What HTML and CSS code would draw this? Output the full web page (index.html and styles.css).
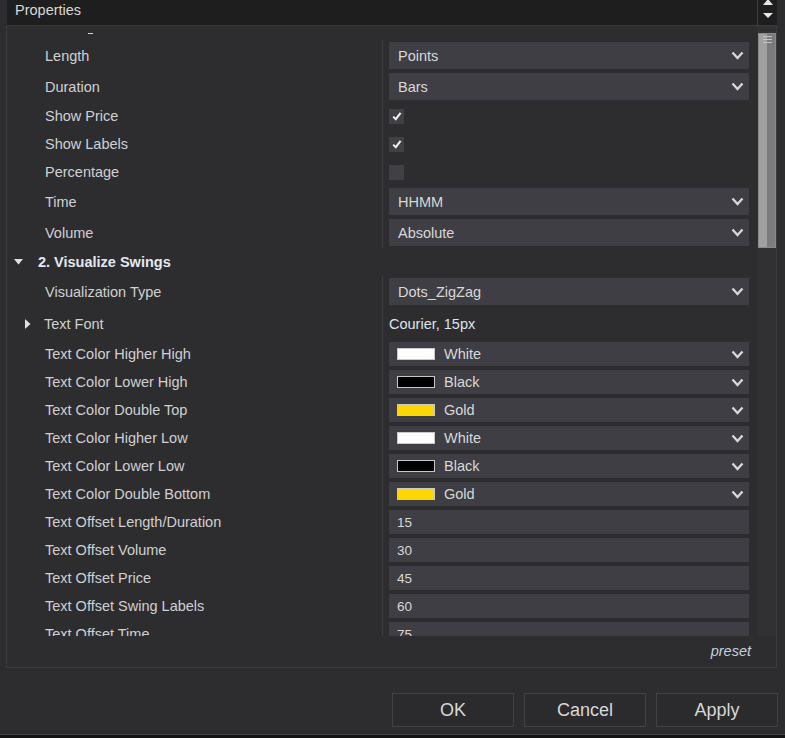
FILE: index.html
```html
<!DOCTYPE html>
<html lang="en">
<head>
    <meta charset="UTF-8">
    <title>Properties</title>
    <link rel="stylesheet" href="styles.css">
</head>
<body>
    <!-- Barre de titre -->
    <div class="header">
        <span class="title">Properties</span>
        <div class="spin">
            <svg class="spin-up" width="10" height="6" viewBox="0 0 10 6"><polygon points="0,6 10,6 5,0" fill="#e6e6e6"/></svg>
            <svg class="spin-down" width="10" height="5" viewBox="0 0 10 5"><polygon points="0,0 10,0 5,5" fill="#e6e6e6"/></svg>
        </div>
    </div>

    <div class="panel">
        <div class="grid-wrap">
            <div class="list">
                <div class="spacer"><span class="tail"></span></div>

                <div class="row row-select">
                    <div class="name">Length</div>
                    <div class="value"><div class="select"><span>Points</span><svg class="chev" width="13" height="9" viewBox="0 0 13 9"><polyline points="1.5,1.5 6.5,7 11.5,1.5"/></svg></div></div>
                </div>
                <div class="row row-select">
                    <div class="name">Duration</div>
                    <div class="value"><div class="select"><span>Bars</span><svg class="chev" width="13" height="9" viewBox="0 0 13 9"><polyline points="1.5,1.5 6.5,7 11.5,1.5"/></svg></div></div>
                </div>
                <div class="row">
                    <div class="name">Show Price</div>
                    <div class="value"><div class="check"><svg width="10" height="9" viewBox="0 0 10 9"><path d="M1.2 4.6 L3.8 7.2 L8.6 0.8"/></svg></div></div>
                </div>
                <div class="row">
                    <div class="name">Show Labels</div>
                    <div class="value"><div class="check"><svg width="10" height="9" viewBox="0 0 10 9"><path d="M1.2 4.6 L3.8 7.2 L8.6 0.8"/></svg></div></div>
                </div>
                <div class="row">
                    <div class="name">Percentage</div>
                    <div class="value"><div class="check"></div></div>
                </div>
                <div class="row row-select">
                    <div class="name">Time</div>
                    <div class="value"><div class="select"><span>HHMM</span><svg class="chev" width="13" height="9" viewBox="0 0 13 9"><polyline points="1.5,1.5 6.5,7 11.5,1.5"/></svg></div></div>
                </div>
                <div class="row row-select">
                    <div class="name">Volume</div>
                    <div class="value"><div class="select"><span>Absolute</span><svg class="chev" width="13" height="9" viewBox="0 0 13 9"><polyline points="1.5,1.5 6.5,7 11.5,1.5"/></svg></div></div>
                </div>

                <!-- Catégorie -->
                <div class="category">
                    <svg width="9" height="6" viewBox="0 0 9 6"><polygon points="0,0 9,0 4.5,5.5" fill="#e0e0e0"/></svg>
                    <span>2. Visualize Swings</span>
                </div>

                <div class="row row-select">
                    <div class="name">Visualization Type</div>
                    <div class="value"><div class="select"><span>Dots_ZigZag</span><svg class="chev" width="13" height="9" viewBox="0 0 13 9"><polyline points="1.5,1.5 6.5,7 11.5,1.5"/></svg></div></div>
                </div>
                <div class="row row-font">
                    <div class="name name-sub">
                        <svg width="6" height="10" viewBox="0 0 6 10"><polygon points="0,0 5.5,5 0,10" fill="#e0e0e0"/></svg>
                        <span>Text Font</span>
                    </div>
                    <div class="value"><span class="plain">Courier, 15px</span></div>
                </div>

                <div class="row">
                    <div class="name">Text Color Higher High</div>
                    <div class="value"><div class="box"><span class="swatch white"></span><span>White</span><svg class="chev" width="13" height="9" viewBox="0 0 13 9"><polyline points="1.5,1.5 6.5,7 11.5,1.5"/></svg></div></div>
                </div>
                <div class="row">
                    <div class="name">Text Color Lower High</div>
                    <div class="value"><div class="box"><span class="swatch black"></span><span>Black</span><svg class="chev" width="13" height="9" viewBox="0 0 13 9"><polyline points="1.5,1.5 6.5,7 11.5,1.5"/></svg></div></div>
                </div>
                <div class="row">
                    <div class="name">Text Color Double Top</div>
                    <div class="value"><div class="box"><span class="swatch gold"></span><span>Gold</span><svg class="chev" width="13" height="9" viewBox="0 0 13 9"><polyline points="1.5,1.5 6.5,7 11.5,1.5"/></svg></div></div>
                </div>
                <div class="row">
                    <div class="name">Text Color Higher Low</div>
                    <div class="value"><div class="box"><span class="swatch white"></span><span>White</span><svg class="chev" width="13" height="9" viewBox="0 0 13 9"><polyline points="1.5,1.5 6.5,7 11.5,1.5"/></svg></div></div>
                </div>
                <div class="row">
                    <div class="name">Text Color Lower Low</div>
                    <div class="value"><div class="box"><span class="swatch black"></span><span>Black</span><svg class="chev" width="13" height="9" viewBox="0 0 13 9"><polyline points="1.5,1.5 6.5,7 11.5,1.5"/></svg></div></div>
                </div>
                <div class="row">
                    <div class="name">Text Color Double Bottom</div>
                    <div class="value"><div class="box"><span class="swatch gold"></span><span>Gold</span><svg class="chev" width="13" height="9" viewBox="0 0 13 9"><polyline points="1.5,1.5 6.5,7 11.5,1.5"/></svg></div></div>
                </div>

                <div class="row">
                    <div class="name">Text Offset Length/Duration</div>
                    <div class="value"><div class="box box-num">15</div></div>
                </div>
                <div class="row">
                    <div class="name">Text Offset Volume</div>
                    <div class="value"><div class="box box-num">30</div></div>
                </div>
                <div class="row">
                    <div class="name">Text Offset Price</div>
                    <div class="value"><div class="box box-num">45</div></div>
                </div>
                <div class="row">
                    <div class="name">Text Offset Swing Labels</div>
                    <div class="value"><div class="box box-num">60</div></div>
                </div>
                <div class="row">
                    <div class="name">Text Offset Time</div>
                    <div class="value"><div class="box box-num">75</div></div>
                </div>
            </div>

            <!-- Barre de défilement -->
            <div class="scrollbar">
                <div class="thumb"><span class="grip"></span></div>
            </div>
        </div>
        <div class="preset">preset</div>
    </div>

    <div class="buttons">
        <button class="btn">OK</button>
        <button class="btn">Cancel</button>
        <button class="btn">Apply</button>
    </div>
    <div class="bottom-strip"></div>
</body>
</html>
```

FILE: styles.css
```css
* {
    margin: 0;
    padding: 0;
    box-sizing: border-box;
}

body {
    width: 785px;
    height: 738px;
    overflow: hidden;
    background-color: #2d2d30;
    font-family: "Liberation Sans", Arial, sans-serif;
    font-size: 14.5px;
    color: #d0d0d0;
}

/* Titre */

.header {
    display: flex;
    margin-left: 7px;
    width: 770px;
    height: 26px;
    background-color: #1e1e1e;
    border-bottom: 1px solid #3c3c3e;
}

.title {
    padding-left: 8px;
    line-height: 20px;
    color: #d8d8d8;
}

.spin {
    margin-left: auto;
    width: 20px;
    border-left: 1px solid #3c3c3e;
    display: flex;
    flex-direction: column;
    align-items: center;
}

.spin-up {
    margin-top: -1px;
}

.spin-down {
    margin-top: 8px;
}

/* Panneau */

.panel {
    margin-left: 6px;
    width: 771px;
    height: 642px;
    border: 1px solid #3c3c3e;
    border-top: none;
}

.grid-wrap {
    display: flex;
    height: 610px;
}

.list {
    width: 750px;
    overflow: hidden;
}

.spacer {
    height: 14px;
    padding-top: 7px;
}

.tail {
    display: block;
    margin-left: 81px;
    width: 5px;
    height: 1px;
    background-color: #c8d4e8;
}

.row {
    display: flex;
    height: 28px;
}

.row-select {
    height: 31px;
}

.row-font {
    height: 33px;
}

.name {
    width: 375px;
    padding-left: 38px;
    display: flex;
    align-items: center;
    white-space: nowrap;
}

.name-sub {
    padding-left: 18px;
    gap: 13px;
}

.value {
    flex: 1;
    border-left: 1px solid #3c3c40;
    padding: 0 8px 0 6px;
    display: flex;
    align-items: center;
}

.select,
.box {
    width: 100%;
    display: flex;
    align-items: center;
    background-color: #3e3e44;
    color: #d8d8d8;
}

.select {
    height: 27px;
    padding-left: 9px;
}

.box {
    height: 24px;
    padding-left: 8px;
}

.box-num {
    font-size: 13.5px;
}

.chev {
    margin-left: auto;
    margin-right: 5px;
    fill: none;
    stroke: #d8d8d8;
    stroke-width: 2.3;
}

.swatch {
    width: 38px;
    height: 12px;
    margin-right: 9px;
    border: 1px solid #c8c8c8;
}

.swatch.white {
    background-color: #ffffff;
}

.swatch.black {
    background-color: #000000;
}

.swatch.gold {
    background-color: #ffd700;
}

.check {
    width: 15px;
    height: 15px;
    background-color: #404046;
    display: flex;
    align-items: center;
    justify-content: center;
}

.check svg {
    fill: none;
    stroke: #f0f0f0;
    stroke-width: 2;
}

.plain {
    color: #dde3ec;
}

.category {
    height: 28px;
    padding-left: 7px;
    display: flex;
    align-items: center;
    gap: 15px;
    font-weight: bold;
    color: #e4e8f0;
}

/* Défilement */

.scrollbar {
    width: 19px;
    background-color: #313134;
    padding: 7px 0 0 1px;
}

.thumb {
    height: 215px;
    background: linear-gradient(to right, #a0a0a0 50%, #7b7b7b 50%);
    border: 1px solid #8a8a8a;
}

.grip {
    display: block;
    margin: 2px 0 0 4px;
    width: 9px;
    height: 7px;
    background: repeating-linear-gradient(to bottom, #c4c4c4 0 1px, transparent 1px 3px);
}

.preset {
    text-align: right;
    padding: 6px 25px 0 0;
    line-height: 18px;
    font-style: italic;
    color: #c8d0dc;
}

/* Boutons */

.buttons {
    display: flex;
    justify-content: flex-end;
    gap: 10px;
    padding: 25px 7px 0 0;
}

.btn {
    width: 122px;
    height: 34px;
    background-color: #2b2b2e;
    border: 1px solid #414146;
    color: #d8d8d8;
    font-family: "Liberation Sans", Arial, sans-serif;
    font-size: 18px;
}

.bottom-strip {
    margin-top: 7px;
    height: 4px;
    background-color: #141414;
    border-top: 1px solid #404044;
}
```
